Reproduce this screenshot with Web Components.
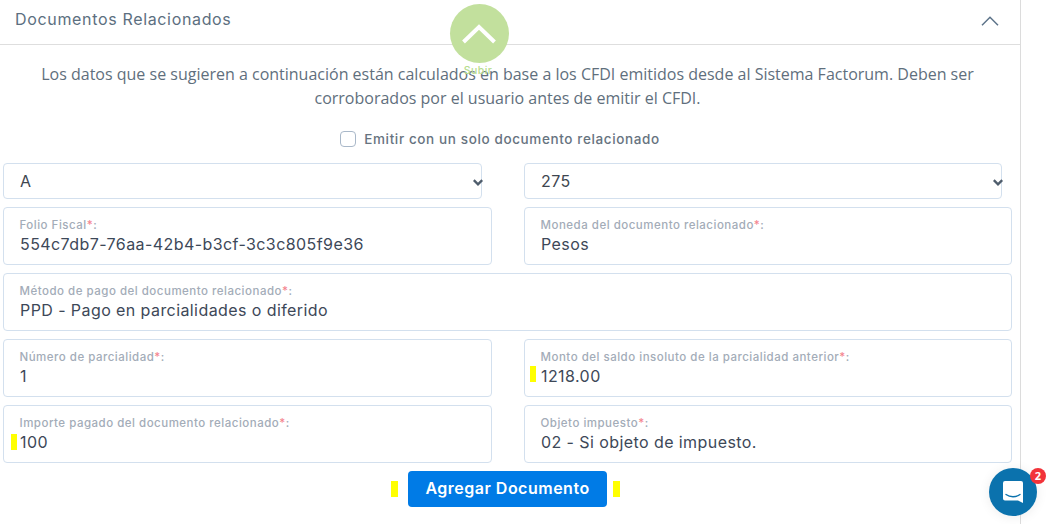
<!DOCTYPE html>
<html lang="es">
<head>
<meta charset="utf-8">
<title>Documentos Relacionados</title>
<style>
  html, body { margin: 0; height: 524px; overflow: hidden; background: #fff; }
  body { font-family: "Open Sans", sans-serif; }
</style>
</head>
<body>
<related-docs>
  <span slot="title">Documentos Relacionados</span>
  <p-note>Los datos que se sugieren a continuación están calculados en base a los CFDI emitidos desde al Sistema Factorum. Deben ser corroborados por el usuario antes de emitir el CFDI.</p-note>
  <check-line>Emitir con un solo documento relacionado</check-line>
  <form-grid>
    <select-box value="A"></select-box>
    <select-box value="275" style="width:478px"></select-box>
    <form-field label="Folio Fiscal">554c7db7-76aa-42b4-b3cf-3c3c805f9e36</form-field>
    <form-field label="Moneda del documento relacionado">Pesos</form-field>
    <form-field wide label="Método de pago del documento relacionado">PPD - Pago en parcialidades o diferido</form-field>
    <form-field label="Número de parcialidad">1</form-field>
    <form-field mark-x="5" mark-y="26" label="Monto del saldo insoluto de la parcialidad anterior">1218.00</form-field>
    <form-field mark-x="7" mark-y="28" label="Importe pagado del documento relacionado">100</form-field>
    <form-field label="Objeto impuesto">02 - Si objeto de impuesto.</form-field>
  </form-grid>
  <add-button>Agregar Documento</add-button>
</related-docs>
<scroll-top></scroll-top>
<chat-bubble count="2"></chat-bubble>

<script>
const poppins = '"Inter", "Open Sans", sans-serif';

class RelatedDocs extends HTMLElement {
  constructor() {
    super();
    this.attachShadow({ mode: "open" }).innerHTML = `
      <style>
        :host { display: block; width: 1020px; height: 524px; border-right: 1px solid #dcdcdc; }
        header {
          height: 44px; border-bottom: 1px solid #dedede;
          display: flex; align-items: center; justify-content: space-between;
          padding: 0 21px 0 15px; color: #5c6f80; font: 16px/40px ${poppins}; letter-spacing: .66px;
        }
        header slot { display: block; margin-top: -6px; }
        svg { display: block; margin-top: -2px; }
        main { display: flex; flex-direction: column; }
      </style>
      <header>
        <span><slot name="title"></slot></span>
        <svg width="18" height="10" viewBox="0 0 18 10" fill="none" stroke="#5c7389" stroke-width="1.5"><path d="M1 9.2 9 1.200l8 8"/></svg>
      </header>
      <main><slot></slot></main>`;
  }
}

class PNote extends HTMLElement {
  constructor() {
    super();
    this.attachShadow({ mode: "open" }).innerHTML = `
      <style>
        :host {
          display: block; box-sizing: border-box; width: 1015px; padding: 17px 35px 0;
          text-align: center; font: 16px/24px "Open Sans", sans-serif; color: #5f6f7d;
        }
      </style><slot></slot>`;
  }
}

class CheckLine extends HTMLElement {
  constructor() {
    super();
    this.attachShadow({ mode: "open" }).innerHTML = `
      <style>
        :host {
          display: flex; align-items: center; justify-content: center; gap: 8px;
          width: 1000px; height: 24px; margin-top: 17px;
          font: 500 13.5px ${poppins}; color: #67737f; letter-spacing: .62px;
        }
        i { width: 14px; height: 14px; border: 1px solid #a9b8c9; border-radius: 4px; display: block; }
      </style><i></i><span><slot></slot></span>`;
  }
}

class FormGrid extends HTMLElement {
  constructor() {
    super();
    this.attachShadow({ mode: "open" }).innerHTML = `
      <style>
        :host {
          display: grid; grid-template-columns: 489px 488px; column-gap: 32px; row-gap: 8px;
          padding: 12px 0 0 3px;
        }
      </style><slot></slot>`;
  }
}

class SelectBox extends HTMLElement {
  constructor() {
    super();
    const v = this.getAttribute("value");
    this.attachShadow({ mode: "open" }).innerHTML = `
      <style>
        :host { display: block; position: relative; width: 479px; height: 36px; }
        select {
          appearance: none; display: block;
          width: 100%; height: 100%; box-sizing: border-box; padding: 0 0 0 16px;
          border: 1px solid #d3e0ee; border-radius: 4px; background: #fff;
          font: 16px ${poppins}; letter-spacing: .4px; color: #3e4650; outline: none;
        }
        svg { position: absolute; right: -1px; top: 16px; }
      </style>
      <select><option>${v}</option></select>
      <svg width="10" height="7" viewBox="0 0 10 7" fill="none" stroke="#4f5d6c" stroke-width="2.4"><path d="M.8 1.200 5 5.300l4.200-4.100"/></svg>`;
  }
}

class FormField extends HTMLElement {
  constructor() {
    super();
    const x = this.getAttribute("mark-x");
    const y = this.getAttribute("mark-y");
    this.attachShadow({ mode: "open" }).innerHTML = `
      <style>
        :host {
          display: block; position: relative; box-sizing: border-box; height: 58px;
          border: 1px solid #d3e0ee; border-radius: 4px; padding: 10px 16px 0; background: #fff;
        }
        :host([wide]) { grid-column: 1 / -1; }
        .lab { font: 500 11.5px/14px ${poppins}; color: #a3acb8; letter-spacing: .5px; white-space: nowrap; margin-left: -.5px; }
        .lab b { font-weight: 500; color: #f4858f; }
        .val { font: 16px/22px ${poppins}; letter-spacing: .42px; color: #3d4858; margin-top: 1px; white-space: nowrap; }
        .mark { position: absolute; width: 6px; height: 16px; background: #ffff00; }
      </style>
      ${x ? `<span class="mark" style="left:${x}px;top:${y}px"></span>` : ''}
      <div class="lab">${this.getAttribute("label")}<b>*</b>:</div>
      <div class="val"><slot></slot></div>`;
  }
}

class AddButton extends HTMLElement {
  constructor() {
    super();
    this.attachShadow({ mode: "open" }).innerHTML = `
      <style>
        :host {
          display: flex; align-items: center; justify-content: center; gap: 10px;
          width: 1011px; margin-top: 8px;
        }
        i { display: block; width: 7px; height: 16px; background: #ffff00; }
        i:last-child { margin-left: -4px; }
        button {
          width: 199px; height: 36px; border: 0; border-radius: 4px; background: #007be6;
          color: #fff; font: 600 16px ${poppins}; letter-spacing: .5px; padding: 0 0 2px;
        }
      </style><i></i><button><slot></slot></button><i></i>`;
  }
}

class ScrollTop extends HTMLElement {
  constructor() {
    super();
    this.attachShadow({ mode: "open" }).innerHTML = `
      <style>
        :host {
          position: absolute; left: 450px; top: 4px; width: 59px; display: block; text-align: center;
        }
        .c { width: 59px; height: 59px; border-radius: 50%; background: #c2e09d; display: flex; align-items: center; justify-content: center; }
        svg { margin-left: -2px; }
        span { display: block; font: 500 10.5px/10px ${poppins}; letter-spacing: .4px; color: #b6dd8e; margin: 3px 0 0 -3px; }
      </style>
      <div class="c"><svg width="34" height="20" viewBox="0 0 34 20" fill="none" stroke="#fff" stroke-width="4"><path d="M1.500 18 17 3l15.500 15"/></svg></div>
      <span>Subir</span>`;
  }
}

class ChatBubble extends HTMLElement {
  constructor() {
    super();
    this.attachShadow({ mode: "open" }).innerHTML = `
      <style>
        :host {
          position: absolute; left: 989px; top: 468px; width: 48px; height: 48px; border-radius: 50%;
          background: #0b72ad; display: flex; align-items: center; justify-content: center;
          box-shadow: 0 1px 12px rgba(0,0,0,.08);
        }
        b {
          position: absolute; left: 41px; top: 0; width: 16px; height: 16px; border-radius: 50%;
          background: #f2333a; color: #fff; font: 700 11px/16px "Open Sans", sans-serif; text-align: center;
        }
      </style>
      <svg width="22" height="24" viewBox="0 0 22 24"><path d="M3 1h16a2 2 0 0 1 2 2v20l-5-2.500H3a2 2 0 0 1-2-2V3a2 2 0 0 1 2-2Z" fill="#fff"/><path d="M4 14.500c4 3 10 3 14 0" fill="none" stroke="#0b72ad" stroke-width="1.300" stroke-linecap="round"/></svg>
      <b>${this.getAttribute("count")}</b>`;
  }
}

customElements.define("related-docs", RelatedDocs);
customElements.define("p-note", PNote);
customElements.define("check-line", CheckLine);
customElements.define("form-grid", FormGrid);
customElements.define("select-box", SelectBox);
customElements.define("form-field", FormField);
customElements.define("add-button", AddButton);
customElements.define("scroll-top", ScrollTop);
customElements.define("chat-bubble", ChatBubble);
</script>
</body>
</html>
